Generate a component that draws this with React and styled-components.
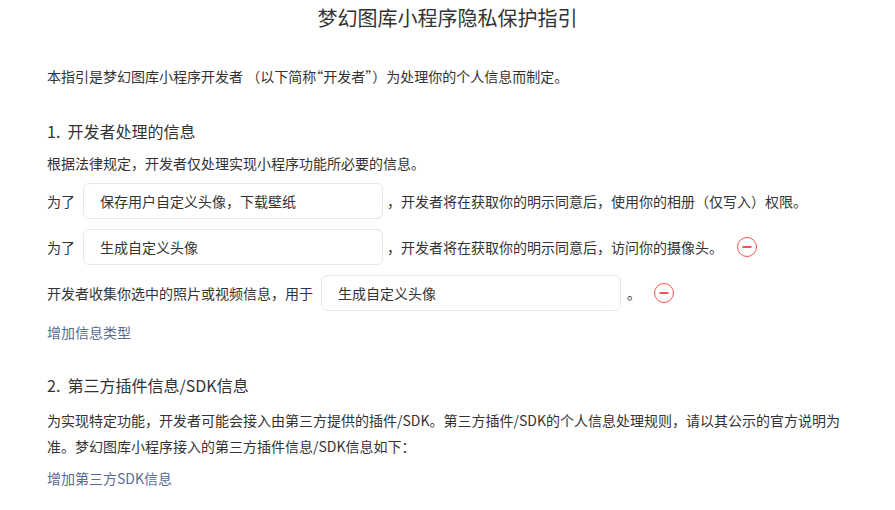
import React from "react";
import styled, { createGlobalStyle } from "styled-components";

const GlobalStyle = createGlobalStyle`
  body {
    margin: 0;
    background: #fff;
    font-family: "Noto Sans CJK SC", "Noto Sans", sans-serif;
    color: #333;
  }
`;

const Page = styled.div`
  padding: 0 47px 0 47px;
`;

const Title = styled.h1`
  margin: 0;
  height: 36px;
  line-height: 36px;
  font-size: 20px;
  font-weight: 400;
  text-align: center;
  color: #333;
`;

const Intro = styled.p`
  margin: 30px 0 0;
  font-size: 14px;
  line-height: 20px;
`;

const Quote = styled.span`
  font-feature-settings: "halt" 1;
`;

const SectionTitle = styled.h2`
  margin: ${(props) => (props.first ? "33px" : "31px")} 0 0;
  font-size: 16px;
  line-height: 24px;
  font-weight: 400;
  color: #333;
`;

const Para = styled.p`
  margin: ${(props) => props.gap || "10px"} 0 0;
  font-size: 14px;
  line-height: ${(props) => props.lh || "20px"};
`;

const Rows = styled.div`
  display: flex;
  flex-direction: column;
  gap: 10px;
  margin-top: 10px;
`;

const Row = styled.div`
  display: flex;
  align-items: center;
  height: 36px;
  font-size: 14px;
`;

const Label = styled.span`
  margin-right: 8px;
  white-space: nowrap;
`;

const Field = styled.div`
  box-sizing: border-box;
  width: 300px;
  height: 36px;
  border: 1px solid #e6e6e6;
  border-radius: 6px;
  padding-left: 16px;
  display: flex;
  align-items: center;
  font-size: 14px;
  color: #333;
  flex-shrink: 0;
`;

const After = styled.span`
  margin-left: ${(props) => props.gap || "4px"};
  white-space: nowrap;
`;

const RemoveButton = styled.button`
  border: none;
  background: none;
  padding: 0;
  margin-left: ${(props) => props.offset || "17px"};
  width: 20px;
  height: 20px;
  display: flex;
  cursor: pointer;
`;

const Link = styled.a`
  display: block;
  font-size: 14px;
  line-height: 20px;
  color: #576b95;
  text-decoration: none;
  margin-top: ${(props) => props.gap || "11px"};
`;

const MinusIcon = () => (
  <svg width="20" height="20" viewBox="0 0 20 20">
    <circle cx="10" cy="10" r="9.5" fill="none" stroke="#fa5151" strokeWidth="1" />
    <line x1="5.5" y1="10" x2="14.5" y2="10" stroke="#fa5151" strokeWidth="2" />
  </svg>
);

const App = () => (
  <>
    <GlobalStyle />
    <Page>
      <Title>梦幻图库小程序隐私保护指引</Title>
      <Intro>
        本指引是梦幻图库小程序开发者 （以下简称<Quote>“</Quote>开发者<Quote>”</Quote>）为处理你的个人信息而制定。
      </Intro>

      <SectionTitle first>1.&nbsp;&nbsp;开发者处理的信息</SectionTitle>
      <Para gap="10px">根据法律规定，开发者仅处理实现小程序功能所必要的信息。</Para>
      <Rows>
        <Row>
          <Label>为了</Label>
          <Field>保存用户自定义头像，下载壁纸</Field>
          <After>，开发者将在获取你的明示同意后，使用你的相册（仅写入）权限。</After>
        </Row>
        <Row>
          <Label>为了</Label>
          <Field>生成自定义头像</Field>
          <After>，开发者将在获取你的明示同意后，访问你的摄像头。</After>
          <RemoveButton offset="14px">
            <MinusIcon />
          </RemoveButton>
        </Row>
        <Row>
          <Label>开发者收集你选中的照片或视频信息，用于</Label>
          <Field>生成自定义头像</Field>
          <After gap="6px">。</After>
          <RemoveButton offset="13px">
            <MinusIcon />
          </RemoveButton>
        </Row>
      </Rows>
      <Link href="#">增加信息类型</Link>

      <SectionTitle>2.&nbsp;&nbsp;第三方插件信息/SDK信息</SectionTitle>
      <Para gap="10px" lh="26px">
        为实现特定功能，开发者可能会接入由第三方提供的插件/SDK。第三方插件/SDK的个人信息处理规则，请以其公示的官方说明为准。梦幻图库小程序接入的第三方插件信息/SDK信息如下：
      </Para>
      <Link href="#" gap="9px">增加第三方SDK信息</Link>
    </Page>
  </>
);

export default App;
